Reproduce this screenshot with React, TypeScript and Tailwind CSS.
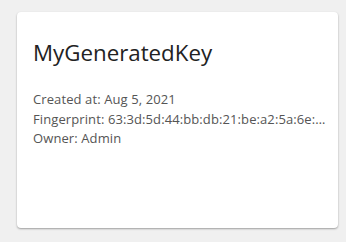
export default function App() {
  return (
    <div className="min-h-[242px] w-[346px] bg-[#f0f0f0] pt-[12px] pl-[17px]" style={{ fontFamily: '"Open Sans", Lato, sans-serif' }}>
      <div className="w-[321px] h-[216px] bg-white rounded-[4px] shadow-[0_1px_2px_rgba(0,0,0,0.35)] pl-[16px] pr-[10px] pt-[26px]">
        <div className="text-[22.3px] leading-[30px] text-[#222]">MyGeneratedKey</div>
        <div className="mt-[22px] text-[13px] leading-[19.7px] tracking-[0.1px] text-[#555]">
          <div>Created at: Aug 5, 2021</div>
          <div className="truncate">Fingerprint: 63:3d:5d:44:bb:db:21:be:a2:5a:6e:1f:7c:9a:33:b1</div>
          <div>Owner: Admin</div>
        </div>
      </div>
    </div>
  );
}
